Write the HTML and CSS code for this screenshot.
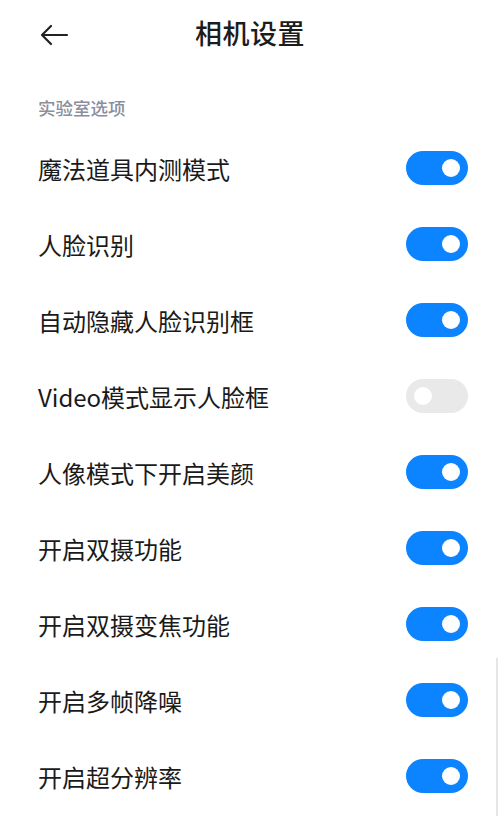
FILE: index.html
```html
<!DOCTYPE html>
<html lang="zh">
<head>
<meta charset="utf-8">
<link rel="stylesheet" href="styles.css">
</head>
<body>
<div class="page">
  <header class="topbar">
    <svg class="back" width="30" height="22" viewBox="0 0 30 22" fill="none" stroke="#222" stroke-width="2.2" stroke-linecap="round" stroke-linejoin="round">
      <path d="M28 11H3M12 2L3 11L12 20"/>
    </svg>
    <h1 class="title">相机设置</h1>
  </header>
  <div class="section">实验室选项</div>
  <ul class="list">
    <li class="row"><span class="label">魔法道具内测模式</span><span class="toggle on"></span></li>
    <li class="row"><span class="label">人脸识别</span><span class="toggle on"></span></li>
    <li class="row"><span class="label">自动隐藏人脸识别框</span><span class="toggle on"></span></li>
    <li class="row"><span class="label">Video模式显示人脸框</span><span class="toggle off"></span></li>
    <li class="row"><span class="label">人像模式下开启美颜</span><span class="toggle on"></span></li>
    <li class="row"><span class="label">开启双摄功能</span><span class="toggle on"></span></li>
    <li class="row"><span class="label">开启双摄变焦功能</span><span class="toggle on"></span></li>
    <li class="row"><span class="label">开启多帧降噪</span><span class="toggle on"></span></li>
    <li class="row"><span class="label">开启超分辨率</span><span class="toggle on"></span></li>
  </ul>
  <div class="scrollbar"></div>
</div>
</body>
</html>
```
FILE: styles.css
```css
* { box-sizing: border-box; }
html, body {
  margin: 0;
  padding: 0;
  background: #fff;
  font-family: "Noto Sans CJK SC", "Noto Sans", sans-serif;
}
.page {
  position: relative;
  width: 500px;
  height: 816px;
  overflow: hidden;
}
.topbar {
  position: relative;
  height: 64px;
  display: flex;
  align-items: center;
  justify-content: center;
}
.back {
  position: absolute;
  left: 39px;
  top: 24px;
}
.title {
  margin: 0;
  font-size: 27px;
  font-weight: 500;
  color: #1c1c1c;
  letter-spacing: 0.5px;
}
.section {
  margin-top: 32px;
  padding-left: 38px;
  font-size: 17.5px;
  color: #8a8e9e;
  line-height: 24px;
  font-weight: 500;
}
.list {
  list-style: none;
  margin: 10px 0 0 0;
  padding: 0;
}
.row {
  height: 76px;
  display: flex;
  align-items: center;
  justify-content: space-between;
  padding: 0 32px 0 38px;
}
.label {
  font-size: 24px;
  color: #1a1a1a;
  font-weight: 400;
}
.toggle {
  position: relative;
  width: 62px;
  height: 34px;
  border-radius: 17px;
  background: #0d84ff;
}
.toggle::after {
  content: "";
  position: absolute;
  top: 8px;
  width: 18px;
  height: 18px;
  border-radius: 50%;
  background: #fff;
}
.toggle.on::after { right: 8px; }
.toggle.off { background: #e9e9e9; }
.toggle.off::after { left: 8px; }
.scrollbar {
  position: absolute;
  right: 2px;
  top: 658px;
  width: 2px;
  height: 158px;
  background: #e6e6e6;
}
```
